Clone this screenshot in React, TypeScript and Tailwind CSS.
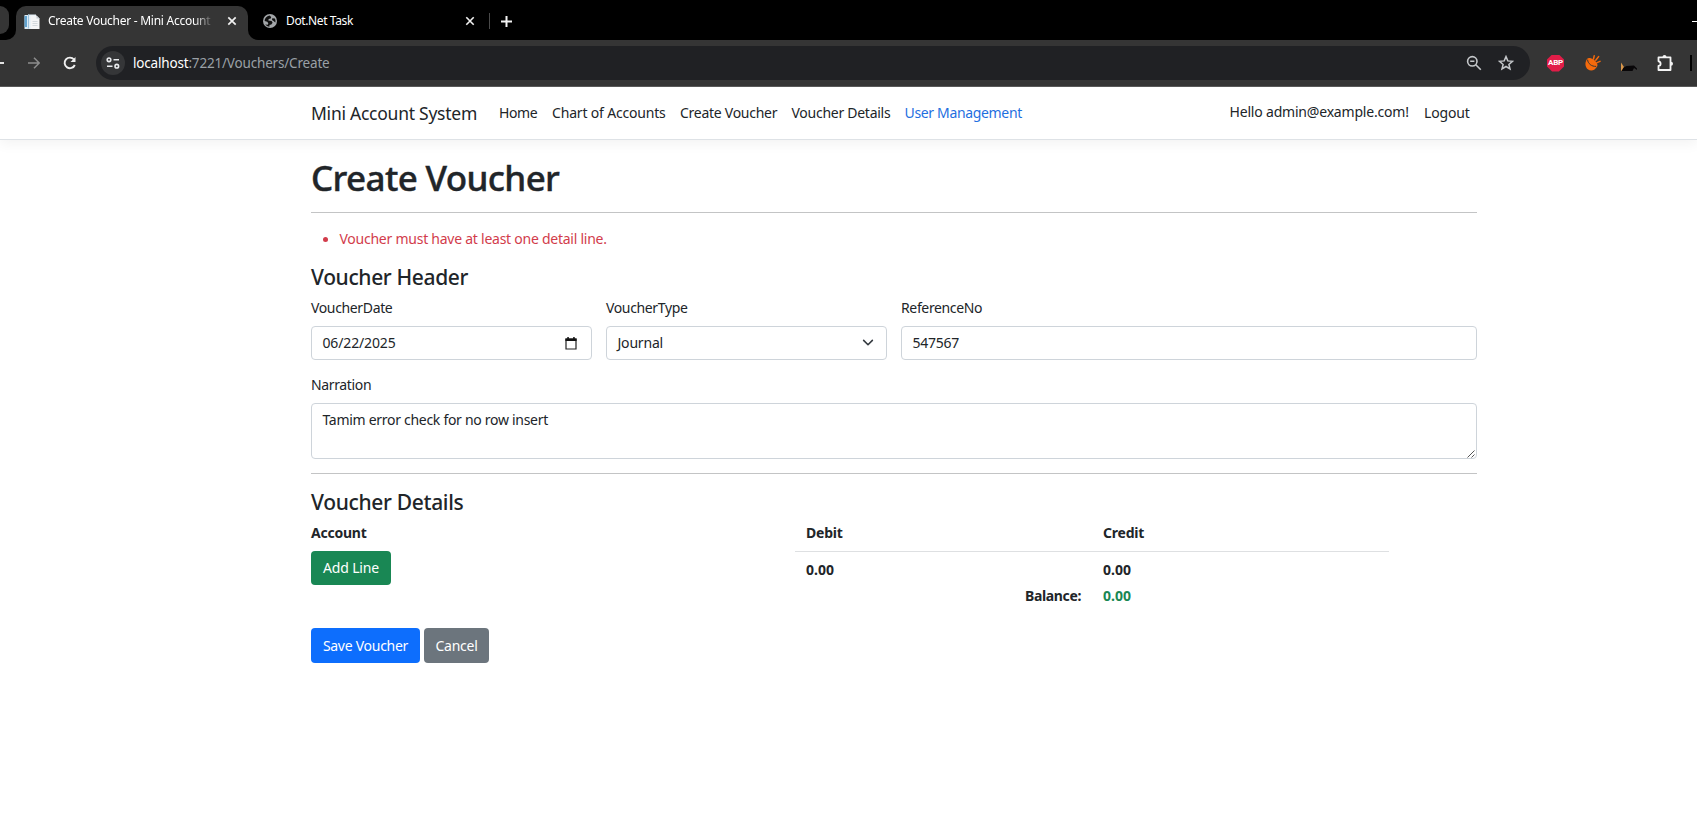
import React from "react";

function BrowserTabs() {
  return (
    <div className="flex h-10 items-end bg-black text-[12px] leading-4 text-white">
      <div className="h-[34px] w-4 shrink-0 bg-[#353535]">
        <div className="h-full w-full rounded-br-[10px] bg-black">
          <div className="h-7 w-[9px] rounded-r-[9px] bg-[#353535]" />
        </div>
      </div>
      <div className="flex h-[34px] w-[232px] shrink-0 items-center rounded-t-[10px] bg-[#353535] pb-1 pl-[8px]">
        <svg className="mt-px h-4 w-4 shrink-0" viewBox="0 0 16 16">
          <path d="M0.500 1h7v14h-7z" fill="#dbeaf5" />
          <path d="M0.500 2h2.500v11H0.500z" fill="#62a3cf" />
          <path d="M4 0.500h8v14H4z" fill="#e2eef6" />
          <path d="M4 0.500h1v14H4z" fill="#9cc3de" />
          <path d="M6.500 1.500h6l3 3V15h-9z" fill="#f4f5f6" />
          <path d="M12.500 1.500v3h3z" fill="#c3ccd2" />
          <path d="M8.500 7.500h5M8.500 9.500h5M8.500 11.500h5" stroke="#d3d9dd" />
        </svg>
        <span className="ml-[8px] w-[166px] shrink-0 overflow-hidden whitespace-nowrap tracking-[-0.26px] [mask-image:linear-gradient(to_right,black_88%,transparent)]">
          Create Voucher - Mini Account S
        </span>
        <svg className="ml-[13px] h-2.5 w-2.5 shrink-0" viewBox="0 0 10 10" stroke="#f1f1f1" strokeWidth="1.7">
          <path d="M1.3 1.3l7.4 7.4M8.7 1.3L1.3 8.7" />
        </svg>
      </div>
      <div className="h-[34px] w-3 shrink-0 bg-[#353535]">
        <div className="h-full w-full rounded-bl-[10px] bg-black" />
      </div>
      <div className="flex h-[34px] flex-1 items-center pb-1">
        <svg className="ml-[3px] h-[14px] w-[14px]" viewBox="0 0 14 14">
          <circle cx="7" cy="7" r="7" fill="#a3a6a9" />
          <path d="M6.500 1.600L8.200 3l-.5 1.600-2 .5-.4 1.500 3.300.5 1 1.700-1.300 1.800-1.900.5.200 1.500c-1.800 0-3.500-.8-4.400-2.100l2.600.2.5-1.500-1-1.400-2.700-.9c.1-2.500 2-4.800 4.900-5.300z" fill="#101010" />
          <path d="M9.300 4.300l2.600.2c.6 1.200.8 2.700.4 4.100L10.600 7.100 9 6z" fill="#101010" />
        </svg>
        <span className="ml-[9px] w-[184px] tracking-[-0.38px]">Dot.Net Task</span>
        <svg className="ml-[-5px] h-2.5 w-2.5" viewBox="0 0 10 10" stroke="#f1f1f1" strokeWidth="1.6">
          <path d="M1.300 1.300l7.400 7.400M8.700 1.300L1.300 8.700" />
        </svg>
        <div className="ml-[14px] h-4 w-px bg-[#4a4a4a]" />
        <svg className="ml-[11px] h-[11px] w-[11px]" viewBox="0 0 11 11" stroke="#f4f4f4" strokeWidth="2">
          <path d="M5.500 0v11M0 5.500h11" />
        </svg>
        <div className="ml-auto h-px w-[5px] bg-white" />
      </div>
    </div>
  );
}

function Toolbar() {
  return (
    <div className="flex h-[47px] items-center border-b border-[#5a5a5a] bg-[#353535]">
      <div className="h-[2px] w-1 shrink-0 bg-[#e3e3e3]" />
      <svg className="ml-[24px] h-3 w-3 shrink-0" viewBox="0 0 12 12" fill="none" stroke="#8d8d8d" strokeWidth="1.500">
        <path d="M0 6h11M6 .8L11.200 6 6 11.200" />
      </svg>
      <svg className="ml-[22px] h-4 w-4 shrink-0" viewBox="0 0 16 16" fill="none" stroke="#f1f1f1" strokeWidth="1.900">
        <path d="M12.800 10A5.300 5.300 0 1 1 12 4.500" />
        <path d="M13.500 2v5H8.500z" fill="#f1f1f1" stroke="none" />
      </svg>
      <div className="ml-[18px] flex h-[34px] w-[1434px] shrink-0 items-center rounded-full bg-[#202124] pl-[5px] pr-[16px]">
        <div className="flex h-6 w-6 items-center justify-center rounded-full bg-[#353638]">
          <svg className="h-3 w-[14px]" viewBox="0 0 14 12" fill="none" stroke="#e8eaed" strokeWidth="1.600">
            <circle cx="3" cy="2.800" r="1.800" />
            <path d="M7.500 2.800H13M1 9.200h5.500" />
            <circle cx="10.800" cy="9.200" r="1.800" />
          </svg>
        </div>
        <span className="ml-2 text-[13.5px] leading-5 tracking-[-0.18px] text-[#9aa0a6]">
          <span className="text-white">localhost</span>:7221/Vouchers/Create
        </span>
        <svg className="ml-auto h-4 w-4" viewBox="0 0 16 16" fill="none" stroke="#c4c7ca" strokeWidth="1.600">
          <circle cx="6.300" cy="6.300" r="4.700" />
          <path d="M9.800 9.800l5 5M4.200 6.300h4.200" />
        </svg>
        <svg className="ml-[16px] h-4 w-4" viewBox="0 0 16 16" fill="none" stroke="#c4c7ca" strokeWidth="1.500">
          <path d="M8 1.600l1.800 4.300 4.700.4-3.600 3.100 1.100 4.600L8 11.500 4 14l1.100-4.600L1.500 6.300l4.700-.4z" />
        </svg>
      </div>
      <div className="ml-[17px] flex h-[17px] w-[17px] shrink-0 items-center justify-center bg-[#e11d48] [clip-path:polygon(30%_0,70%_0,100%_30%,100%_70%,70%_100%,30%_100%,0_70%,0_30%)]">
        <span className="font-['Roboto'] text-[8px] font-bold leading-none tracking-[-0.2px] text-white">ABP</span>
      </div>
      <svg className="ml-[21px] h-4 w-4 shrink-0" viewBox="0 0 16 16">
        <path d="M2.500 3.800C-.6 7 0 12 2.800 14.300c3 2.300 7.400 1.300 9.200-3z" fill="#f56a0c" />
        <ellipse cx="7" cy="7.800" rx="6.300" ry="3.600" transform="rotate(38 7 7.800)" fill="#f56a0c" />
        <path d="M2.600 4.600c.2 4 4 7 8.600 6.800" fill="none" stroke="#353535" strokeWidth="1" />
        <path d="M8.500 4L9.200.8M10.800 5.300L13.600 1.600M12 7.600l3-1.200" stroke="#f56a0c" strokeWidth="1.500" strokeLinecap="round" />
      </svg>
      <svg className="ml-[20px] h-4 w-4 shrink-0" viewBox="0 0 16 16">
        <path d="M0 7.500L3 12v3.800H0z" fill="#d8964a" />
        <path d="M.5 16L2.500 12.500 5.500 11 13 10.500 16 13.500v1.500l-3-2-1.500 3z" fill="#080608" />
      </svg>
      <svg className="ml-[20px] h-[18px] w-[17px] shrink-0" viewBox="0 0 17 18" fill="none" stroke="#f4f4f4" strokeWidth="1.800">
        <path d="M1.500 3.400h12V16h-12v-4c1.400-.2 2.100-1.100 2.100-2.300S2.900 7.500 1.500 7.300z" strokeLinejoin="round" />
        <path d="M5.500 3a2 2 0 0 1 4 0zM14 7.700a2 2 0 0 1 0 4z" fill="#f4f4f4" stroke="none" />
      </svg>
      <div className="ml-[16px] h-4 w-[2px] shrink-0 bg-black" />
    </div>
  );
}

function NavBar() {
  return (
    <nav className="flex h-[53px] shrink-0 items-center whitespace-nowrap border-b border-[#dee2e6] bg-white pl-[311px] shadow-[0_4px_12px_rgba(0,0,0,0.05)]">
      <span className="w-[188px] text-[17.5px] leading-6 tracking-[-0.25px]">Mini Account System</span>
      <a className="w-[53px] tracking-[-0.4px]">Home</a>
      <a className="w-[128px] tracking-[-0.18px]">Chart of Accounts</a>
      <a className="w-[111.500px] tracking-[-0.27px]">Create Voucher</a>
      <a className="w-[113px] tracking-[-0.27px]">Voucher Details</a>
      <a className="w-[325px] tracking-[-0.34px] text-[#1f6fe0]">User Management</a>
      <span className="w-[194.500px] pb-[2px] tracking-[-0.19px]">Hello admin@example.com!</span>
      <a className="tracking-[-0.16px]">Logout</a>
    </nav>
  );
}

function Label({ children }: { children: React.ReactNode }) {
  return <label className="mb-[7px] block h-[22px] tracking-[-0.36px]">{children}</label>;
}

const control = "flex h-[34px] items-center rounded-[4px] border border-[#ced4da] bg-white pl-[10.5px]";

export default function App() {
  return (
    <div className="flex h-[826px] w-[1697px] flex-col overflow-hidden bg-white font-['Noto_Sans','Open_Sans',sans-serif] text-[14px] leading-[22px] text-[#212529]">
      <BrowserTabs />
      <Toolbar />
      <NavBar />
      <main className="ml-[311px] w-[1166px] pt-4">
        <h1 className="h-[43px] text-[35px] font-medium leading-[43px] tracking-[-0.64px] [-webkit-text-stroke:0.4px]">Create Voucher</h1>
        <hr className="mb-[15px] mt-[13px] border-[#c3c4c5]" />
        <ul className="flex h-[22px] items-center pl-3 tracking-[-0.25px] text-[#d23c4b]">
          <li className="flex items-center">
            <span className="mr-[11.5px] h-[5px] w-[5px] rounded-full bg-[#d23c4b]" />
            Voucher must have at least one detail line.
          </li>
        </ul>
        <h4 className="mb-[7px] mt-[14px] text-[21px] font-medium leading-[26px] tracking-[-0.36px]">Voucher Header</h4>
        <div className="grid grid-cols-[281px_281px_576px] gap-x-[14px]">
          <div>
            <Label>VoucherDate</Label>
            <div className={`${control} justify-between pr-[14px]`}>
              <span className="tracking-[-0.14px]">06/22/2025</span>
              <svg className="h-[13px] w-[12px]" viewBox="0 0 12 13">
                <path d="M1 2h10v10H1z" fill="none" stroke="#222" strokeWidth="1.200" />
                <path d="M.4 1.400h11.200V4H.4zM2.300 0h1.500v2H2.300zM8.200 0h1.500v2H8.200z" fill="#111" />
              </svg>
            </div>
          </div>
          <div>
            <Label>VoucherType</Label>
            <div className={`${control} justify-between pr-[11px]`}>
              <span className="tracking-[-0.2px]">Journal</span>
              <svg className="h-[14px] w-[14px]" viewBox="0 0 16 16" fill="none" stroke="#343a40" strokeWidth="1.800" strokeLinecap="round" strokeLinejoin="round">
                <path d="m3 5 5 5 5-5" />
              </svg>
            </div>
          </div>
          <div>
            <Label>ReferenceNo</Label>
            <div className={control}>
              <span className="tracking-[-0.26px]">547567</span>
            </div>
          </div>
        </div>
        <div className="mt-[14px]">
          <Label>Narration</Label>
          <div className="flex h-14 items-start justify-between rounded-[4px] border border-[#ced4da] pl-[10.5px] pr-px pt-[5px] tracking-[-0.29px]">
            <span>Tamim error check for no row insert</span>
            <svg className="h-2 w-2 self-end" viewBox="0 0 8 8" stroke="#555" strokeWidth="1">
              <path d="M.5 7.500l7-7M4.500 7.500l3-3" />
            </svg>
          </div>
        </div>
        <hr className="mb-[15px] mt-[14px] border-[#c3c4c5]" />
        <h4 className="mb-[7px] text-[21px] font-medium leading-[26px] tracking-[-0.33px]">Voucher Details</h4>
        <div className="flex h-[106px] font-bold">
          <div className="w-[484px]">
            <div className="h-[29px] tracking-[-0.24px]">Account</div>
            <button className="block h-[34px] w-20 rounded-[4px] bg-[#198754] font-normal tracking-[-0.14px] text-white">Add Line</button>
          </div>
          <div className="w-[594px]">
            <div className="grid h-[30px] grid-cols-2 border-b border-[#dee0e2] tracking-[-0.2px]">
              <span className="pl-[11px]">Debit</span>
              <span className="pl-[11px]">Credit</span>
            </div>
            <div className="mt-[7px] grid grid-cols-2 gap-y-1">
              <span className="pl-[11px]">0.00</span>
              <span className="pl-[11px]">0.00</span>
              <span className="pr-[11px] text-right tracking-[-0.36px]">Balance:</span>
              <span className="pl-[11px] text-[#198754]">0.00</span>
            </div>
          </div>
        </div>
        <div className="flex gap-1 text-white">
          <button className="h-[35px] w-[109px] rounded-[4px] bg-[#0d6efd] tracking-[-0.27px]">Save Voucher</button>
          <button className="h-[35px] w-[65px] rounded-[4px] bg-[#6c757d] tracking-[-0.26px]">Cancel</button>
        </div>
      </main>
    </div>
  );
}
